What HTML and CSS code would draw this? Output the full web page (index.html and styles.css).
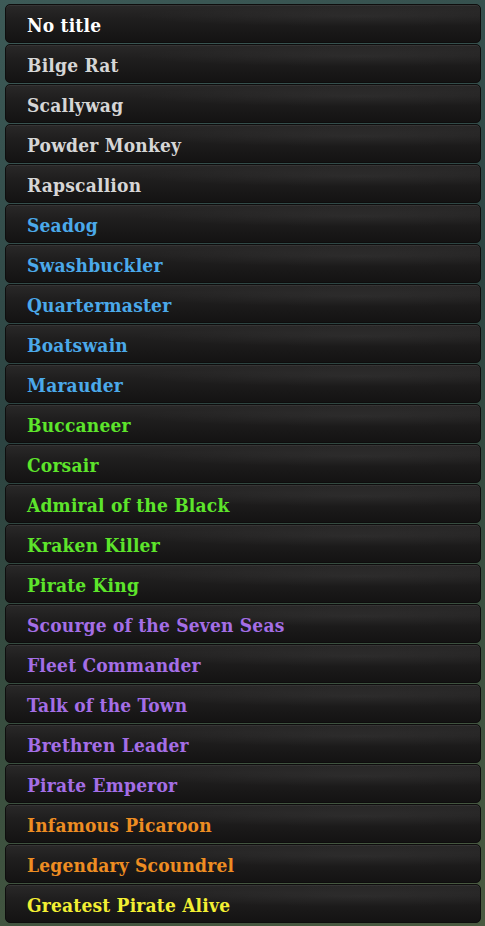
FILE: index.html
```html
<!DOCTYPE html>
<html lang="en">
<head>
    <meta charset="UTF-8">
    <meta name="viewport" content="width=device-width, initial-scale=1.0">
    <title>Pirate Titles</title>
    <link rel="stylesheet" href="styles.css">
</head>
<body>
<ul class="title-list">
    <li class="title-row rank-none">No title</li>
    <li class="title-row rank-grey">Bilge Rat</li>
    <li class="title-row rank-grey">Scallywag</li>
    <li class="title-row rank-grey">Powder Monkey</li>
    <li class="title-row rank-grey">Rapscallion</li>
    <li class="title-row rank-blue">Seadog</li>
    <li class="title-row rank-blue">Swashbuckler</li>
    <li class="title-row rank-blue">Quartermaster</li>
    <li class="title-row rank-blue">Boatswain</li>
    <li class="title-row rank-blue">Marauder</li>
    <li class="title-row rank-green">Buccaneer</li>
    <li class="title-row rank-green">Corsair</li>
    <li class="title-row rank-green">Admiral of the Black</li>
    <li class="title-row rank-green">Kraken Killer</li>
    <li class="title-row rank-green">Pirate King</li>
    <li class="title-row rank-purple">Scourge of the Seven Seas</li>
    <li class="title-row rank-purple">Fleet Commander</li>
    <li class="title-row rank-purple">Talk of the Town</li>
    <li class="title-row rank-purple">Brethren Leader</li>
    <li class="title-row rank-purple">Pirate Emperor</li>
    <li class="title-row rank-orange">Infamous Picaroon</li>
    <li class="title-row rank-orange">Legendary Scoundrel</li>
    <li class="title-row rank-yellow">Greatest Pirate Alive</li>
</ul>
</body>
</html>
```
FILE: styles.css
```css
body {
    margin: 0;
    height: 926px;
    overflow: hidden;
    font-family: "DejaVu Serif", "Liberation Serif", serif;
    background-color: #34504c;
    background-image: linear-gradient(160deg, #3d5a57 0%, #2c4341 40%, #3a4f3f 70%, #4a5a40 100%);
}

.title-list {
    list-style: none;
    margin: 0;
    padding: 4px 4px 0 5px;
    display: flex;
    flex-direction: column;
    gap: 1px;
}

.title-row {
    box-sizing: border-box;
    height: 39px;
    padding: 2px 0 0 21px;
    display: flex;
    align-items: center;
    border: 1px solid #0e0d0d;
    border-radius: 5px;
    background-color: #1c1b1b;
    background-image:
        radial-gradient(ellipse 70% 40% at 75% 30%, rgba(255, 255, 255, 0.05), rgba(255, 255, 255, 0) 70%),
        linear-gradient(to bottom, #2a2929 0%, #201f1f 35%, #181717 75%, #141313 100%);
    box-shadow: inset 0 1px 0 rgba(255, 255, 255, 0.06);
    font-size: 19px;
    font-stretch: condensed;
    font-weight: bold;
    letter-spacing: 0.2px;
    white-space: nowrap;
}

.rank-none {
    color: #ffffff;
}

.rank-grey {
    color: #d6d6d6;
}

.rank-blue {
    color: #4ba9ea;
}

.rank-green {
    color: #5de52b;
}

.rank-purple {
    color: #a46ee6;
}

.rank-orange {
    color: #ee8d22;
}

.rank-yellow {
    color: #f3ef33;
}
```
